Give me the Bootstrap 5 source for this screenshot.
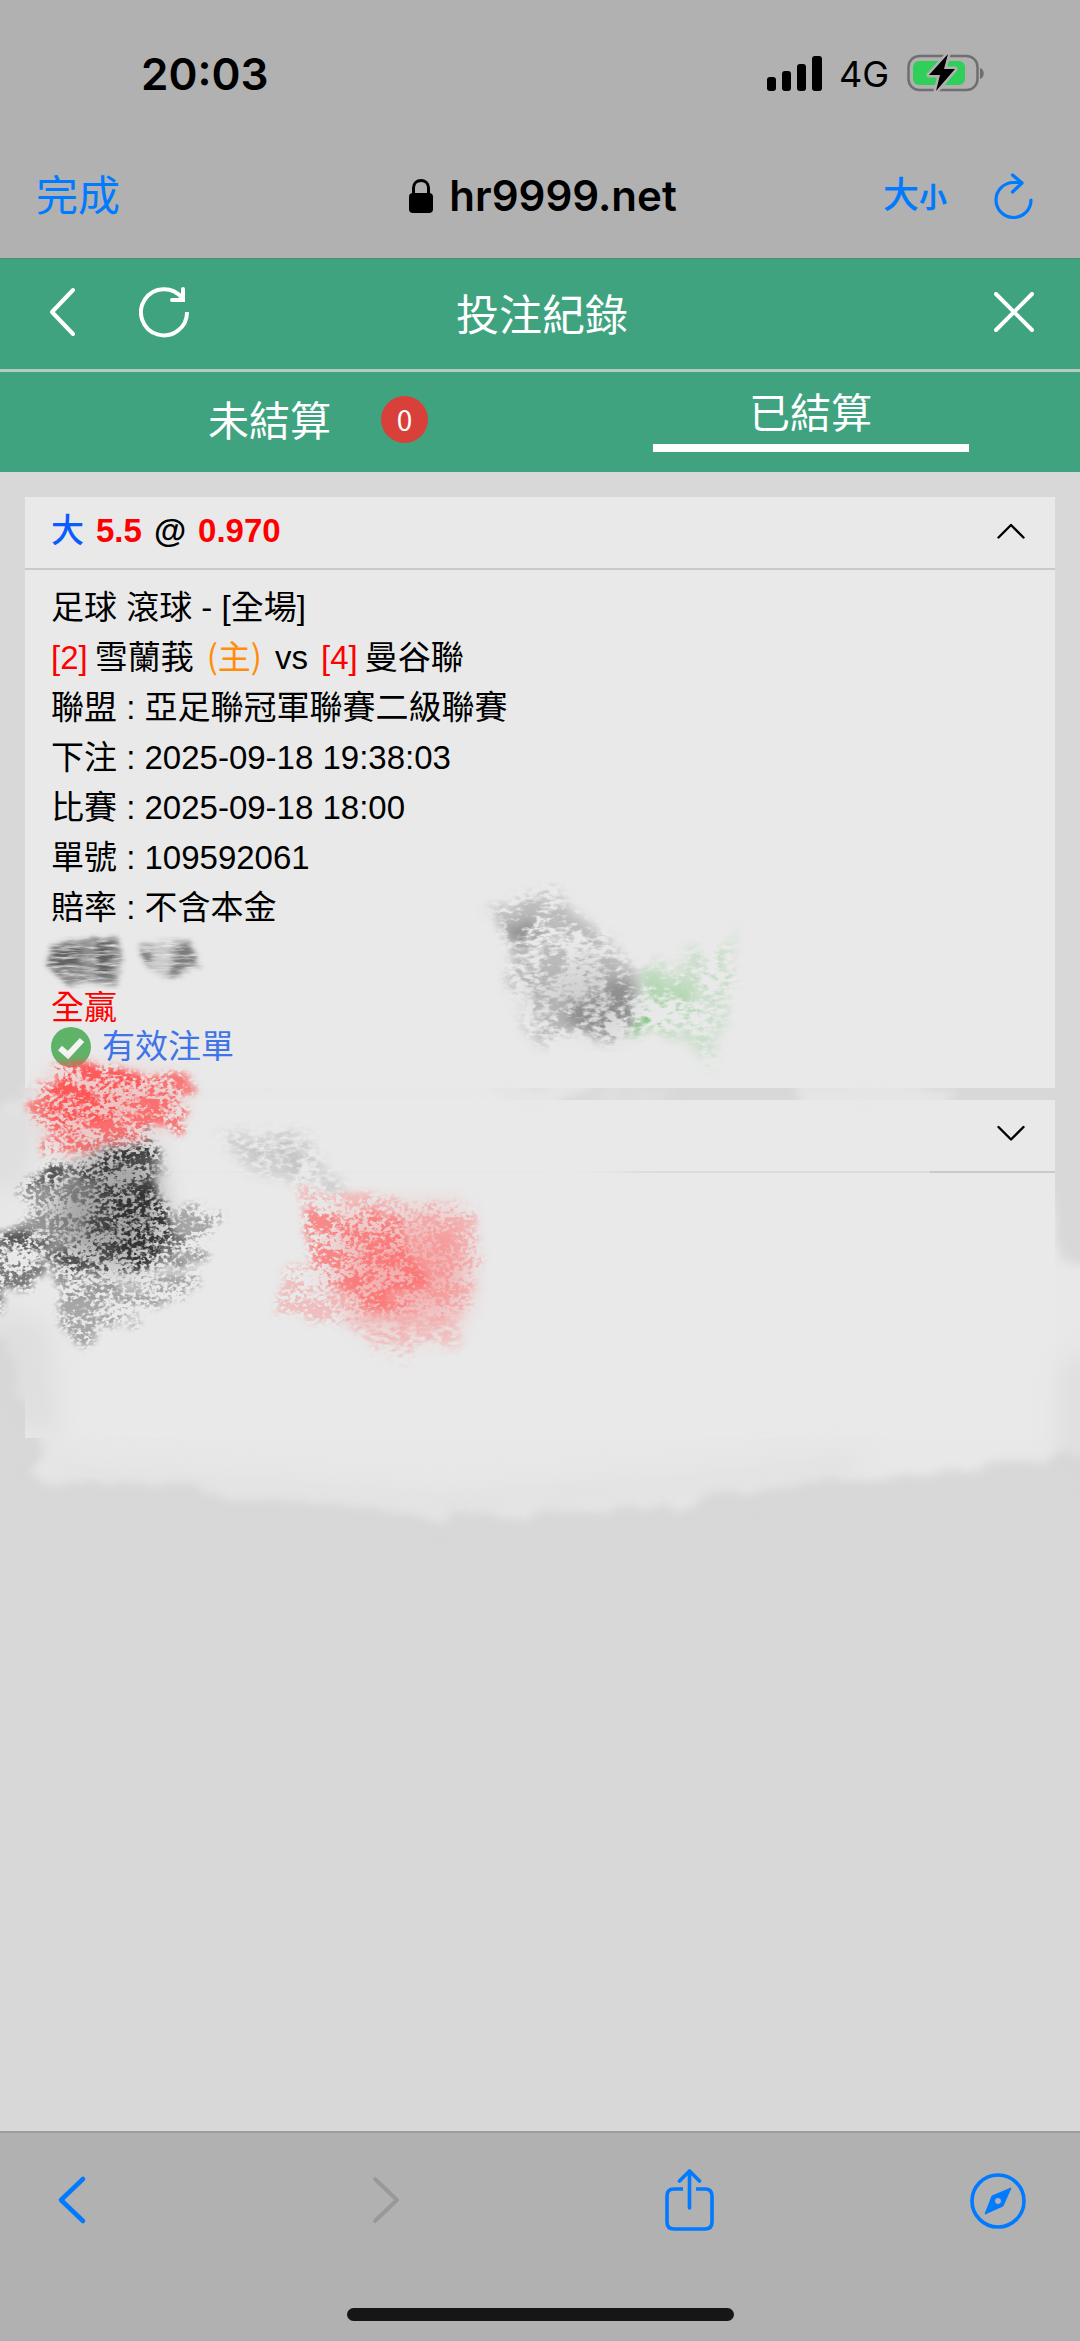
<!DOCTYPE html>
<html lang="zh-Hant">
<head>
<meta charset="utf-8">
<meta name="viewport" content="width=device-width, initial-scale=1">
<title>投注紀錄</title>
<link rel="stylesheet" href="https://cdn.jsdelivr.net/npm/bootstrap@5.3.0/dist/css/bootstrap.min.css">
<style>
  body { background: #d8d8d8; color: #000; font-family: "Liberation Sans", "Noto Sans CJK TC", sans-serif; }
  svg { display: block; flex: none; }
  .chrome { background: #b1b1b1; font-family: Inter, "Noto Sans CJK TC", sans-serif; }
  .plain { background: none; border: 0; padding: 0; color: inherit; text-decoration: none; }
  .ios-blue { color: #007aff; }
  .status-row { height: 148px; padding: 0 95px 0 141px; }
  .clock { font-size: 44px; font-weight: 600; line-height: 56px; }
  .net-type { font-size: 36px; line-height: 44px; margin: 0 18px 0 16px; }
  .url-row { height: 110px; padding: 0 46px 14px 36px; }
  .done { font-size: 42px; line-height: 56px; }
  .host { font-size: 42px; line-height: 56px; font-weight: 600; gap: 16px; padding-left: 16px; }
  .size-big { font-size: 36px; font-weight: 500; line-height: 44px; }
  .size-small { font-size: 28px; font-weight: 700; line-height: 44px; }
  .size-gap { margin-right: 47px; }
  .green { background: #40a380; color: #fff; font-family: "Noto Sans CJK TC", sans-serif; }
  .title-row { height: 114px; padding: 0 46px 4px 40px; border-bottom: 3px solid #b5ccc2; border-top: 1px solid #4f8a74; }
  .page-title { font-size: 43px; line-height: 60px; font-weight: 400; }
  .lead-icons { gap: 64px; padding-left: 10px; }
  .tabs { height: 100px; }
  .tab-link { color: #fff; text-decoration: none; font-size: 41px; line-height: 68px; height: 100px; }
  .tab-open { padding-bottom: 8px; padding-right: 2px; }
  .tab-rule { width: 316px; border-bottom: 8px solid #fff; }
  .count { left: 100%; margin-left: 50px; top: 12px; width: 47px; height: 47px; font-size: 28px; line-height: 47px; background: #d9403a; }
  .list { padding: 25px 25px 0; gap: 12px; }
  .slip { background: #e9e9e9; font-size: 33px; }
  .slip-head { height: 73px; padding: 0 30px 4px 26px; border-bottom: 2px solid #c9c9c9; line-height: 50px; font-weight: 700; }
  .slip-body { padding: 13px 26px 25px; line-height: 50px; }
  .bet-line { gap: 12px; }
  .teams { height: 50px; gap: 7px; }
  .slip-empty { height: 265px; }
  .red { color: #f00; }
  .orange { color: #ff8c0a; font-family: "Noto Sans CJK TC", sans-serif; line-height: 1; margin: 0 6px; }
  .rival { margin-left: 6px; }
  .pick { color: #0a5cff; font-weight: 500; }
  .masked { height: 50px; }
  .valid { height: 28px; gap: 11px; color: #3f74e8; }
  .valid-end { height: 2px; }
  .wash { left: 0; top: 0; width: 100%; pointer-events: none; }
  .tool-row { height: 210px; border-top: 2px solid #9d9d9d; padding: 36px 0 20px; }
  .tools { padding: 0 54px 0 42px; }
  .home-bar { width: 387px; height: 13px; background: #161616; }
</style>
<script src="https://cdn.jsdelivr.net/npm/bootstrap@5.3.0/dist/js/bootstrap.bundle.min.js"></script>
</head>
<body class="d-flex flex-column min-vh-100">

<header class="chrome">
  <div class="status-row d-flex align-items-center">
    <span class="clock me-auto">20:03</span>
    <svg width="56" height="36" viewBox="0 0 56 36"><rect x="0" y="21" width="9" height="14" rx="3"/><rect x="15" y="15" width="9" height="20" rx="3"/><rect x="30" y="8" width="9" height="27" rx="3"/><rect x="45" y="0" width="10" height="35" rx="3"/></svg>
    <span class="net-type">4G</span>
    <svg width="78" height="40" viewBox="0 0 78 40">
      <rect x="1.5" y="2" width="69" height="34" rx="11" fill="none" stroke="#6f6f73" stroke-width="2.5"/>
      <path d="M73 14c5 1 5 10 0 11z" fill="#6f6f73"/>
      <rect x="6" y="7" width="52" height="24" rx="6" fill="#30cf5a"/>
      <path d="M41 0 22 21h11l-4 16 19-22H37z" fill="#000" stroke="#b1b1b1" stroke-width="5" paint-order="stroke" stroke-linejoin="round"/>
    </svg>
  </div>
  <div class="url-row d-flex align-items-center">
    <div class="col"><button type="button" class="plain done ios-blue">完成</button></div>
    <div class="host d-flex align-items-center">
      <svg width="24" height="34" viewBox="0 0 24 34"><rect x="0" y="14" width="24" height="20" rx="4"/><path d="M4.500 15V9c0-10 15-10 15 0v6" fill="none" stroke="#000" stroke-width="3"/></svg>
      <span>hr9999.net</span>
    </div>
    <div class="col d-flex justify-content-end align-items-center ios-blue">
      <button type="button" class="plain size-gap"><span class="size-big">大</span><span class="size-small">小</span></button>
      <button type="button" class="plain" aria-label="重新載入">
        <svg width="40" height="46" viewBox="0 0 40 46" fill="none" stroke="#007aff" stroke-width="3.200" stroke-linecap="round" stroke-linejoin="round"><path d="M37 27A17.500 17.500 0 1 1 19.500 9.500h8.500M18.500 2 28 10 18.500 19"/></svg>
      </button>
    </div>
  </div>
</header>

<div class="green">
  <div class="title-row d-flex align-items-center">
    <div class="lead-icons col d-flex align-items-center">
      <button type="button" class="plain" aria-label="返回"><svg width="25" height="50" viewBox="0 0 25 50" fill="none" stroke="#fff" stroke-width="4" stroke-linecap="round" stroke-linejoin="round"><path d="M23 3 2 25 23 47"/></svg></button>
      <button type="button" class="plain" aria-label="重新整理"><svg width="50" height="52" viewBox="0 0 50 52" fill="none" stroke="#fff" stroke-width="4"><path d="M48 26A23 23 0 1 1 43 12"/><path d="M44 3v11H33" stroke-linecap="round"/></svg></button>
    </div>
    <h1 class="page-title m-0">投注紀錄</h1>
    <div class="col d-flex justify-content-end">
      <button type="button" class="plain" aria-label="關閉"><svg width="40" height="40" viewBox="0 0 40 40" stroke="#fff" stroke-width="4" stroke-linecap="round"><path d="M2 2 38 38M38 2 2 38"/></svg></button>
    </div>
  </div>
  <nav class="tabs d-flex">
    <a href="#" class="tab-link tab-open col d-flex justify-content-center align-items-center"><span class="position-relative">未結算<span class="count position-absolute rounded-circle text-center">0</span></span></a>
    <a href="#" class="tab-link col d-flex justify-content-center" aria-current="page"><span class="tab-rule mt-1 mb-auto text-center">已結算</span></a>
  </nav>
</div>

<main class="flex-grow-1 position-relative">
  <div class="list d-flex flex-column">
    <section class="slip">
      <div class="slip-head d-flex align-items-center">
        <div class="bet-line d-flex me-auto"><span class="pick">大</span><span class="red">5.5</span><span>@</span><span class="red">0.970</span></div>
        <button type="button" class="plain" aria-label="收合"><svg width="28" height="18" viewBox="0 0 28 18" fill="none" stroke="#000" stroke-width="2.400" stroke-linecap="round" stroke-linejoin="round"><path d="M1.500 15.500 14 3 26.500 15.500"/></svg></button>
      </div>
      <div class="slip-body">
        <div>足球 滾球 - [全場]</div>
        <div class="teams d-flex align-items-baseline"><span class="red">[2]</span><span>雪蘭莪</span><span class="orange">(主)</span><span>vs</span><span class="red rival">[4]</span><span>曼谷聯</span></div>
        <div>聯盟 : 亞足聯冠軍聯賽二級聯賽</div>
        <div>下注 : 2025-09-18 19:38:03</div>
        <div>比賽 : 2025-09-18 18:00</div>
        <div>單號 : 109592061</div>
        <div>賠率 : 不含本金</div>
        <div class="masked"></div>
        <div class="red">全贏</div>
        <div class="valid d-flex align-items-center">
          <svg width="40" height="40" viewBox="0 0 40 40"><circle cx="20" cy="20" r="20" fill="#5fb368"/><path d="M9 21 17 28 31 13" fill="none" stroke="#f4f4f4" stroke-width="6"/></svg>
          <span>有效注單</span>
        </div>
        <div class="valid-end"></div>
      </div>
    </section>
    <section class="slip">
      <div class="slip-head d-flex align-items-center justify-content-end">
        <button type="button" class="plain" aria-label="展開"><svg width="28" height="18" viewBox="0 0 28 18" fill="none" stroke="#000" stroke-width="2.400" stroke-linecap="round" stroke-linejoin="round"><path d="M1.500 2 14 14.500 26.500 2"/></svg></button>
      </div>
      <div class="slip-empty"></div>
    </section>
  </div>

  <!-- eraser and crayon strokes drawn over the slips -->
  <svg class="wash position-absolute" viewBox="0 472 1080 1088" aria-hidden="true">
    <defs>
      <filter id="crayon" x="-10%" y="-10%" width="120%" height="120%">
        <feTurbulence type="fractalNoise" baseFrequency="0.22 0.28" numOctaves="2" seed="4" result="n"/>
        <feTurbulence type="fractalNoise" baseFrequency="0.03 0.06" numOctaves="3" seed="7" result="w"/>
        <feComposite in="n" in2="w" operator="arithmetic" k2=".6" k3=".4" result="m"/>
        <feColorMatrix in="m" values="0 0 0 0 1  0 0 0 0 1  0 0 0 0 1  8 0 0 0 -3.500" result="g"/>
        <feDisplacementMap in="SourceGraphic" in2="w" scale="30" result="d"/>
        <feGaussianBlur in="d" stdDeviation="3" result="b"/>
        <feComposite in="b" in2="g" operator="in" result="c"/>
        <feGaussianBlur in="c" stdDeviation=".5"/>
      </filter>
      <filter id="smudge" x="-15%" y="-15%" width="130%" height="130%">
        <feTurbulence type="fractalNoise" baseFrequency="0.12 0.22" numOctaves="3" seed="14" result="n"/>
        <feTurbulence type="fractalNoise" baseFrequency="0.03" numOctaves="3" seed="5" result="w"/>
        <feComposite in="n" in2="w" operator="arithmetic" k2=".5" k3=".5" result="m"/>
        <feColorMatrix in="m" values="0 0 0 0 1  0 0 0 0 1  0 0 0 0 1  6 0 0 0 -2.500" result="g"/>
        <feDisplacementMap in="SourceGraphic" in2="w" scale="50" result="d"/>
        <feGaussianBlur in="d" stdDeviation="6" result="b"/>
        <feComposite in="b" in2="g" operator="in"/>
      </filter>
      <filter id="streak" x="-10%" y="-10%" width="120%" height="120%">
        <feTurbulence type="fractalNoise" baseFrequency="0.05 0.35" numOctaves="3" seed="9" result="n"/>
        <feColorMatrix in="n" values="0 0 0 0 1  0 0 0 0 1  0 0 0 0 1  2 0 0 0 -.2" result="g"/>
        <feDisplacementMap in="SourceGraphic" in2="n" scale="16" result="d"/>
        <feGaussianBlur in="d" stdDeviation="2" result="b"/>
        <feComposite in="b" in2="g" operator="in"/>
      </filter>
      <filter id="chalk" x="-10%" y="-10%" width="120%" height="120%">
        <feTurbulence type="fractalNoise" baseFrequency="0.02 0.05" numOctaves="4" seed="2" result="n"/>
        <feDisplacementMap in="SourceGraphic" in2="n" scale="30" result="d"/>
        <feGaussianBlur in="d" stdDeviation="5"/>
      </filter>
      <filter id="soft" x="-20%" y="-20%" width="140%" height="140%"><feGaussianBlur stdDeviation="14"/></filter>
    </defs>
    <g fill="#e9e9e9" filter="url(#chalk)">
      <path d="M-40 1125 60 1075H480L560 1160 700 1185H1050L1062 1262 1120 1255V1452L1055 1458 860 1480 730 1498 560 1508 440 1520 330 1504 250 1500 170 1484 40 1484 36 1412 20 1400 8 1340-40 1320Z" opacity=".92"/>
      <path d="M470 1080H600L560 1110H470Z" opacity=".8"/>
      <path d="M800 1084H948V1108H800Z" opacity=".8"/>
      <path d="M600 1086H680L660 1106H590Z" opacity=".4"/>
    </g>
    <path d="M545 1172H930" stroke="#e9e9e9" stroke-width="4" opacity=".6"/>
    <g fill="#d4d4d4" filter="url(#soft)" opacity=".5">
      <path d="M-20 1100 40 1110 30 1180-20 1200ZM-20 1310 50 1320 60 1440 20 1430ZM1060 1370 1100 1340V1470H1060Z"/>
      <path d="M40 1460 250 1474 440 1490 700 1470 860 1450 860 1480 560 1510 440 1520 250 1500 40 1484Z" opacity=".6"/>
    </g>
    <g fill="#333" filter="url(#streak)">
      <path d="M50 944 118 936 122 956 116 984H66L48 968Z" opacity=".5"/>
      <path d="M96 942 112 940 114 976H98ZM58 946 82 944 80 968 50 968Z" opacity=".5"/>
      <path d="M140 944 192 940 200 966 168 980 148 970Z" opacity=".2"/>
      <path d="M174 942 192 944 198 966 170 978ZM140 948 152 946 150 964 142 962Z" opacity=".5"/>
    </g>
    <path d="M60 1070 185 1084 170 1120 60 1150 42 1110Z" fill="#ff6666" opacity=".3" filter="url(#soft)"/>
    <g fill="#ff4a4a" filter="url(#crayon)">
      <path d="M54 1060 195 1078 194 1090 178 1112 180 1128 140 1136 100 1148 44 1162 48 1130 32 1122 36 1092 54 1080Z" opacity=".7"/>
      <path d="M56 1060 160 1074 130 1096 110 1122 80 1132 50 1118 52 1080Z" opacity=".6"/>
    </g>
    <path d="M100 1150 150 1150 165 1230 130 1270 60 1250 50 1200Z" fill="#444" opacity=".4" filter="url(#soft)"/>
    <g fill="#222" filter="url(#crayon)">
      <path d="M22 1182 152 1134 166 1172 158 1190 172 1232 198 1250 150 1272 60 1300 50 1250 0 1240V1232L26 1220Z" opacity=".4"/>
      <path d="M22 1180 156 1132 150 1156 160 1180 172 1236 150 1272 118 1280 52 1268 90 1220 100 1170 26 1190Z" opacity=".55"/>
      <path d="M104 1190 158 1190 172 1236 140 1270 118 1250ZM100 1155 156 1132 150 1150 100 1170Z" opacity=".6"/>
      <path d="M-10 1230 50 1236 50 1266 30 1284-10 1310Z" opacity=".55"/>
      <path d="M170 1206 222 1208 198 1258 164 1270ZM56 1296 196 1268 202 1292 72 1340 64 1330Z" opacity=".32"/>
    </g>
    <g fill="#555" filter="url(#smudge)">
      <path d="M210 1130 310 1136 336 1184 300 1186 250 1170Z" opacity=".18"/>
      <path d="M250 1146 300 1150 306 1170 270 1166Z" opacity=".15"/>
    </g>
    <path d="M330 1210 460 1208 466 1300 380 1310 330 1290Z" fill="#ff6666" opacity=".24" filter="url(#soft)"/>
    <path d="M360 1240 462 1230 462 1300 450 1330 380 1336 345 1300Z" fill="#ff6666" opacity=".25" filter="url(#soft)"/>
    <g fill="#ff5a5a" filter="url(#crayon)">
      <path d="M298 1186 420 1202 474 1206 476 1264 470 1306 400 1325 270 1312 280 1272 308 1260 302 1212Z" opacity=".3"/>
      <path d="M306 1214 400 1214 408 1250 430 1280 380 1310 340 1294 308 1262Z" opacity=".5"/>
    </g>
    <path d="M350 1320 470 1310 440 1352 370 1360Z" fill="#ff5a5a" opacity=".25" filter="url(#smudge)"/>
    <g fill="#777" filter="url(#smudge)">
      <path d="M492 912 550 880 570 910 610 940 640 976 624 1048 590 1034 530 1040 534 1006 502 980 506 940Z" opacity=".4"/>
      <path d="M506 930 534 920 536 950 510 950ZM560 1008 624 980 640 990 622 1044 590 1036 560 1016Z" opacity=".6"/>
    </g>
    <path d="M520 990 590 960 636 990 616 1036 560 1016Z" fill="#888" opacity=".25" filter="url(#soft)"/>
    <g fill="#6cc06c" filter="url(#smudge)">
      <path d="M640 980 740 928 726 1000 708 1070 690 1040 640 1034Z" opacity=".25"/>
      <path d="M630 1014 660 1008 668 1030 630 1038Z" opacity=".8"/>
      <path d="M640 990 690 980 680 1014 648 1010Z" opacity=".25"/>
    </g>
  </svg>
</main>

<footer class="chrome tool-row d-flex flex-column justify-content-between align-items-center">
  <div class="tools d-flex justify-content-between w-100">
    <button type="button" class="plain" aria-label="上一頁"><svg width="60" height="62" viewBox="0 0 60 62" fill="none" stroke="#007aff" stroke-width="4.500" stroke-linecap="round" stroke-linejoin="round"><path d="M41 10 19 31 41 52"/></svg></button>
    <button type="button" class="plain" aria-label="下一頁"><svg width="60" height="62" viewBox="0 0 60 62" fill="none" stroke="#999" stroke-width="4" stroke-linecap="round" stroke-linejoin="round"><path d="M25 10 47 31 25 52"/></svg></button>
    <button type="button" class="plain" aria-label="分享"><svg width="60" height="62" viewBox="0 0 60 62" fill="none" stroke="#007aff" stroke-width="3.600" stroke-linecap="round" stroke-linejoin="round"><path d="M25 20h-9q-7 0-7 7v26q0 7 7 7h31q7 0 7-7V27q0-7-7-7h-9" stroke-linecap="butt"/><path d="M31.500 39V2M21.500 12 31.500 2l10 10"/></svg></button>
    <button type="button" class="plain" aria-label="Safari"><svg width="60" height="62" viewBox="0 0 60 62"><circle cx="32" cy="32" r="26" fill="none" stroke="#007aff" stroke-width="3.600"/><path d="M45 19 26 27 19 45 37 37ZM32 28.500a3.500 3.500 0 1 1 0 7 3.500 3.500 0 0 1 0-7Z" fill="#007aff" fill-rule="evenodd" stroke="#007aff" stroke-width="1" stroke-linejoin="round"/></svg></button>
  </div>
  <div class="home-bar rounded-pill"></div>
</footer>
</body>
</html>
